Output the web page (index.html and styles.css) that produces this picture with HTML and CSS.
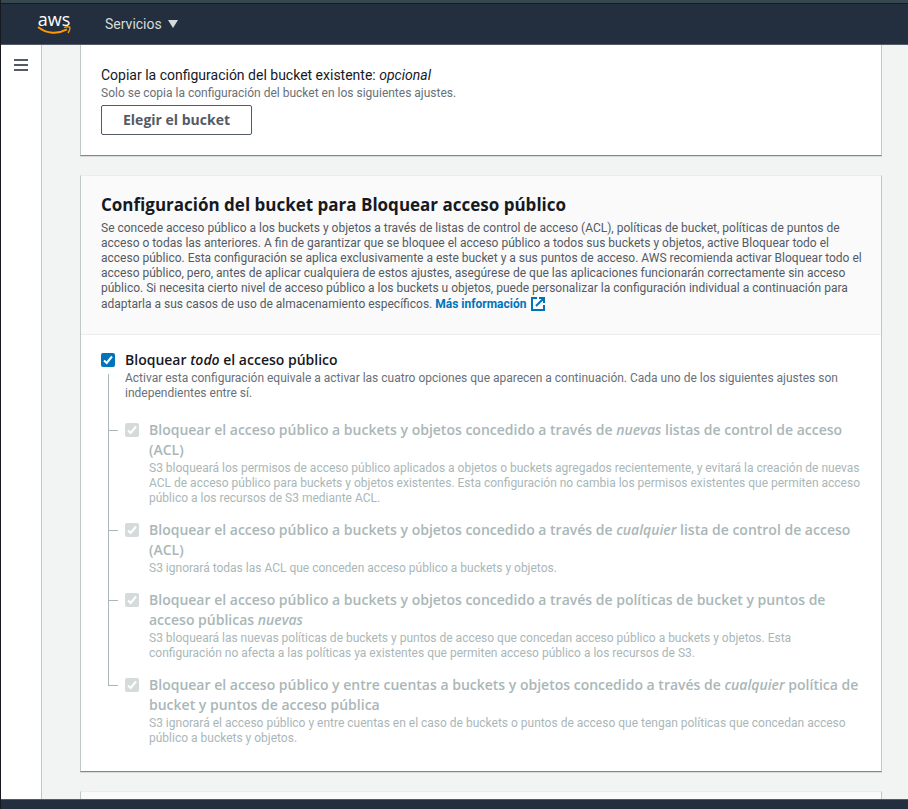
FILE: index.html
```
<!DOCTYPE html>
<html lang="es">
<head>
<meta charset="utf-8">
<meta name="viewport" content="width=device-width, initial-scale=1">
<title>S3: Crear bucket</title>
<link rel="stylesheet" href="styles.css">
</head>
<body>
<header class="topbar">
  <a class="logo" href="#">
    <span class="logo-text">aws</span>
    <svg class="logo-smile" viewBox="0 0 34 9" aria-hidden="true">
      <path d="M1 1C10 8.200 21 8.200 30 3.400" fill="none" stroke="#f90" stroke-width="2"/>
      <path d="M27 1.500C29 .8 31.500.6 32.800 1.200C33.200 3 32.300 5.300 31 7" fill="none" stroke="#f90" stroke-width="1.300"/>
    </svg>
  </a>
  <button class="services" type="button">Servicios <span class="caret"></span></button>
</header>
<div class="shell">
  <nav class="rail">
    <button class="menu" type="button" aria-label="Menú"><span></span><span></span><span></span></button>
  </nav>
  <main class="content">
    <section class="card card-first">
      <h3 class="field-title">Copiar la configuración del bucket existente: <em>opcional</em></h3>
      <p class="hint">Solo se copia la configuración del bucket en los siguientes ajustes.</p>
      <button class="btn" type="button">Elegir el bucket</button>
    </section>

    <section class="card">
      <div class="card-head">
        <h2>Configuración del bucket para Bloquear acceso público</h2>
        <p>Se concede acceso público a los buckets y objetos a través de listas de control de acceso (ACL), políticas de bucket, políticas de puntos de<br>
        acceso o todas las anteriores. A fin de garantizar que se bloquee el acceso público a todos sus buckets y objetos, active Bloquear todo el<br>
        acceso público. Esta configuración se aplica exclusivamente a este bucket y a sus puntos de acceso. AWS recomienda activar Bloquear todo el<br>
        acceso público, pero, antes de aplicar cualquiera de estos ajustes, asegúrese de que las aplicaciones funcionarán correctamente sin acceso<br>
        público. Si necesita cierto nivel de acceso público a los buckets u objetos, puede personalizar la configuración individual a continuación para<br>
        adaptarla a sus casos de uso de almacenamiento específicos. <a class="more" href="#">Más información <svg viewBox="0 0 14 14" aria-hidden="true"><path d="M6 1H1v12h12V8M8 1h5v5M13 1L5 9" fill="none" stroke="currentColor" stroke-width="2"/></svg></a></p>
      </div>
      <div class="card-body">
        <div class="option">
          <span class="check"><input type="checkbox" id="all" checked><svg viewBox="0 0 14 14" aria-hidden="true"><path d="M3 7.500L5.700 10L11 3.500" fill="none" stroke="#fff" stroke-width="2"/></svg></span>
          <div>
            <label for="all">Bloquear <em>todo</em> el acceso público</label>
            <p class="hint">Activar esta configuración equivale a activar las cuatro opciones que aparecen a continuación. Cada uno de los siguientes ajustes son<br>independientes entre sí.</p>
          </div>
        </div>
        <ul class="tree">
          <li class="option">
            <span class="check"><input type="checkbox" id="o1" checked disabled><svg viewBox="0 0 14 14" aria-hidden="true"><path d="M3 7.500L5.700 10L11 3.500" fill="none" stroke="#fff" stroke-width="2"/></svg></span>
            <div>
              <label for="o1">Bloquear el acceso público a buckets y objetos concedido a través de <em>nuevas</em> listas de control de acceso<br>(ACL)</label>
              <p class="hint">S3 bloqueará los permisos de acceso público aplicados a objetos o buckets agregados recientemente, y evitará la creación de nuevas<br>ACL de acceso público para buckets y objetos existentes. Esta configuración no cambia los permisos existentes que permiten acceso<br>público a los recursos de S3 mediante ACL.</p>
            </div>
          </li>
          <li class="option">
            <span class="check"><input type="checkbox" id="o2" checked disabled><svg viewBox="0 0 14 14" aria-hidden="true"><path d="M3 7.500L5.700 10L11 3.500" fill="none" stroke="#fff" stroke-width="2"/></svg></span>
            <div>
              <label for="o2">Bloquear el acceso público a buckets y objetos concedido a través de <em>cualquier</em> lista de control de acceso<br>(ACL)</label>
              <p class="hint">S3 ignorará todas las ACL que conceden acceso público a buckets y objetos.</p>
            </div>
          </li>
          <li class="option">
            <span class="check"><input type="checkbox" id="o3" checked disabled><svg viewBox="0 0 14 14" aria-hidden="true"><path d="M3 7.500L5.700 10L11 3.500" fill="none" stroke="#fff" stroke-width="2"/></svg></span>
            <div>
              <label for="o3">Bloquear el acceso público a buckets y objetos concedido a través de políticas de bucket y puntos de<br>acceso públicas <em>nuevas</em></label>
              <p class="hint">S3 bloqueará las nuevas políticas de buckets y puntos de acceso que concedan acceso público a buckets y objetos. Esta<br>configuración no afecta a las políticas ya existentes que permiten acceso público a los recursos de S3.</p>
            </div>
          </li>
          <li class="option">
            <span class="check"><input type="checkbox" id="o4" checked disabled><svg viewBox="0 0 14 14" aria-hidden="true"><path d="M3 7.500L5.700 10L11 3.500" fill="none" stroke="#fff" stroke-width="2"/></svg></span>
            <div>
              <label for="o4">Bloquear el acceso público y entre cuentas a buckets y objetos concedido a través de <em>cualquier</em> política de<br>bucket y puntos de acceso pública</label>
              <p class="hint">S3 ignorará el acceso público y entre cuentas en el caso de buckets o puntos de acceso que tengan políticas que concedan acceso<br>público a buckets y objetos.</p>
            </div>
          </li>
        </ul>
      </div>
    </section>

    <section class="card"><div class="card-head"></div></section>
  </main>
</div>
<footer class="bottombar"></footer>
</body>
</html>
```
FILE: styles.css
```
* { box-sizing: border-box; }
h2, h3, p, ul { margin: 0; padding: 0; }
button { font: inherit; cursor: pointer; }

body {
  margin: 0;
  height: 100vh;
  display: flex;
  flex-direction: column;
  overflow: hidden;
  border-left: 1px solid #16191f;
  background: #f2f3f3;
  color: #16191f;
  font: 12px/15px Roboto, "Liberation Sans", sans-serif;
}

.topbar {
  flex: none;
  height: 45px;
  display: flex;
  align-items: center;
  gap: 34px;
  padding-left: 36px;
  background: #232f3e;
  border-top: 3px solid #37474f;
  border-bottom: 1px solid #545b64;
  box-shadow: inset 0 1px #16191f;
}
.logo {
  width: 34px;
  display: flex;
  flex-direction: column;
  align-items: center;
  color: #fff;
  text-decoration: none;
}
.logo-text { font: 500 18px/14px "Open Sans", sans-serif; }
.logo-smile { display: block; width: 34px; height: 9px; }
.services {
  display: flex;
  align-items: center;
  gap: 6px;
  padding: 1px 0 0;
  border: 0;
  background: none;
  color: #d5dbdb;
  font-size: 14px;
}
.caret {
  border: 5px solid transparent;
  border-top: 8px solid #d5dbdb;
  border-bottom: 0;
}

.shell { flex: 1; min-height: 0; display: flex; }
.rail {
  flex: none;
  width: 41px;
  padding: 14px 13px;
  background: #fff;
  border-right: 1px solid #bfc8c8;
}
.menu {
  display: flex;
  flex-direction: column;
  gap: 3px;
  padding: 0;
  border: 0;
  background: none;
}
.menu span { width: 14px; height: 2px; background: #545b64; }

.content {
  flex: 1;
  min-width: 0;
  display: flex;
  flex-direction: column;
  gap: 19px;
  padding: 0 26px 0 38px;
  overflow: hidden;
}
.card {
  flex: none;
  background: #fff;
  border: 1px solid #bfc8c8;
  border-top-color: #eaeded;
  border-bottom-color: #7b8a8b;
  box-shadow: 0 1px #d5dbdb;
  white-space: nowrap;
}
.card-first { padding: 20px; border-top: 0; }
.field-title { font-size: 14px; line-height: 20px; font-weight: 400; }
.hint { padding-top: 1px; color: #687078; }
.btn {
  display: block;
  height: 30px;
  margin-top: 4px;
  padding: 0 21px;
  border: 1px solid #545b64;
  border-radius: 2px;
  background: #fff;
  color: #545b64;
  font: 700 14px/20px "Open Sans", sans-serif;
}

.card-head {
  min-height: 30px;
  padding: 18px 20px 22px;
  background: #fafafa;
  border-bottom: 1px solid #eaeded;
  color: #545b64;
}
.card-head h2 {
  margin-bottom: 5px;
  color: #16191f;
  font: 700 17px/22px "Open Sans", sans-serif;
}
.more {
  color: #0073bb;
  font: 700 12px/16px Roboto, sans-serif;
  text-decoration: none;
}
.more svg { width: 14px; height: 14px; margin-left: 2px; vertical-align: -3px; }

.card-body { padding: 15px 20px 25px; }
.option { display: flex; gap: 10px; position: relative; }
.option label {
  display: block;
  font: 600 14px/20px "Open Sans", sans-serif;
}
.check { flex: none; display: grid; width: 14px; height: 14px; margin-top: 3px; }
.check input, .check svg { grid-area: 1 / 1; width: 14px; height: 14px; margin: 0; }
.check svg { pointer-events: none; z-index: 1; }
.check input {
  appearance: none;
  border-radius: 2px;
  background: #0073bb;
}
.check input:disabled { background: #d5dbdb; }

.tree {
  position: relative;
  display: grid;
  gap: 14px;
  margin-top: 19px;
  padding-left: 24px;
  list-style: none;
}
.tree label, .tree .hint { color: #aab7b8; }
.tree .option::before {
  content: "";
  position: absolute;
  left: -17px;
  top: 10px;
  width: 10px;
  border-top: 1px solid #aab7b8;
}
.tree::before {
  content: "";
  position: absolute;
  left: 7px;
  top: -46px;
  bottom: 60px;
  border-left: 1px solid #aab7b8;
}

.bottombar {
  flex: none;
  height: 10px;
  background: #232f3e;
  border-top: 1px solid #545b64;
}
```
